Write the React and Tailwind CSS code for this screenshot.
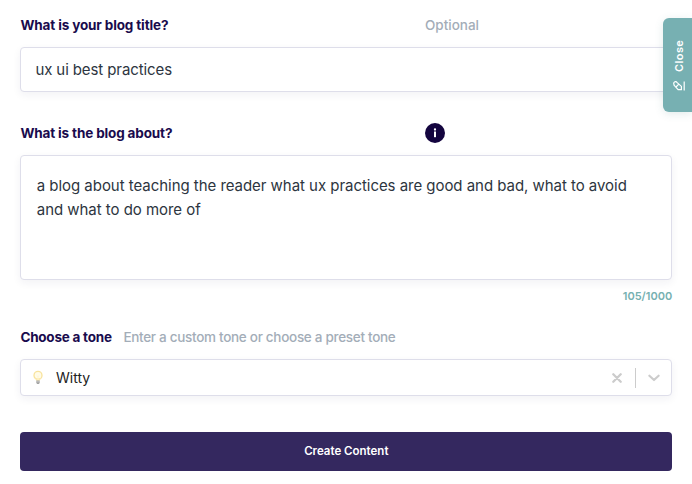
function Label({ children, className = "" }) {
  return <span className={`font-bold text-[13.5px] text-[#190b4d] whitespace-nowrap ${className}`}>{children}</span>;
}

function Bulb() {
  return (
    <svg width="10" height="16" viewBox="0 0 10 16" fill="none">
      <circle cx="5" cy="5.4" r="4" fill="#fffbe8" stroke="#f8e39c" strokeWidth="1.3" />
      <path d="M2.2 8 3.3 10.7h3.4L7.8 8" fill="#fbe9b0" />
      <path d="M3.8 5.6 5 6.6l1.2-1M5 6.6V10" stroke="#fff6d2" strokeWidth=".9" />
      <path d="M3.3 10.5h3.4v2.4L5.8 14H4.2l-.9-1.1Z" fill="#a2a2a2" />
      <path d="M3.3 11.8h3.4" stroke="#ddd" strokeWidth=".6" />
    </svg>
  );
}

const box = "rounded-[4px] border border-[#dedeea] bg-white shadow-[0_3px_8px_rgba(40,40,80,0.06)]";

export default function App() {
  return (
    <div className="relative h-[484px] w-[692px] overflow-hidden bg-white pl-[20.4px] pr-[19.8px] pt-[15px] font-['Inter',sans-serif]">
      <div className="flex h-5 items-center">
        <Label className="w-[404.6px] tracking-[-0.13px]">What is your blog title?</Label>
        <span className="text-[13.5px] font-medium text-[#a3adb8]">Optional</span>
      </div>
      <div className={`${box} mt-3 flex h-[45px] items-center px-[14px] pt-px text-[15px] tracking-[-0.1px] text-[#2d3540]`}>
        <span className="whitespace-nowrap">ux ui best practices</span>
      </div>

      <div className="mt-[31px] flex h-5 items-center">
        <Label className="w-[404.6px] tracking-[-0.14px]">What is the blog about?</Label>
        <span className="flex size-5 items-center justify-center rounded-full bg-[#14053f]">
          <svg width="4" height="10" viewBox="0 0 4 10" fill="#fff">
            <circle cx="2" cy="1.5" r="1.15" />
            <rect x="1" y="3.5" width="2" height="5.7" />
          </svg>
        </span>
      </div>
      <div className={`${box} mt-[11.5px] h-[125.5px] px-[15.4px] pt-[18.5px] text-[15px] leading-6 tracking-[-0.04px] text-[#2d3540]`}>
        <p className="whitespace-nowrap">a blog about teaching the reader what ux practices are good and bad, what to avoid</p>
        <p className="whitespace-nowrap">and what to do more of</p>
      </div>
      <div className="mt-2 flex h-4 items-center justify-end text-[11px] font-semibold text-[#76b0b1]">105/1000</div>

      <div className="mt-[23px] flex h-5 items-center">
        <Label className="w-[103px] tracking-[-0.23px]">Choose a tone</Label>
        <span className="whitespace-nowrap text-[13.5px] font-medium tracking-[-0.3px] text-[#a3adb8]">Enter a custom tone or choose a preset tone</span>
      </div>
      <div className={`${box} mt-[12px] flex h-[37px] items-center pl-3 pr-[11.2px]`}>
        <Bulb />
        <span className="ml-[12.6px] flex-1 text-[14px] text-[#222]">Witty</span>
        <svg width="10" height="10" viewBox="0 0 10 10" stroke="#ccc" strokeWidth="2.3" strokeLinecap="round">
          <path d="m1.3 1.3 7.4 7.4m0-7.4L1.3 8.7" />
        </svg>
        <span className="ml-[13px] h-5 w-px bg-[#ccc]" />
        <svg className="ml-[12px]" width="12" height="8" viewBox="0 0 12 8" fill="none" stroke="#ccc" strokeWidth="2.1" strokeLinecap="round" strokeLinejoin="round">
          <path d="m1.4 1.7 4.6 4.4 4.6-4.4" />
        </svg>
      </div>

      <button className="mt-[35.5px] flex h-[39px] w-full items-center justify-center rounded-[4px] bg-[#34285f] pt-px text-[11.5px] font-semibold text-white">
        Create Content
      </button>

      <div className="absolute right-0 top-[18px] flex h-[94px] w-[28.6px] flex-col items-center rounded-l-[6px] bg-[#77b0b2] pl-[3px] pt-[21px] text-white shadow-[0_2px_8px_rgba(60,120,120,0.15)]">
        <span className="h-[33px] rotate-180 text-[11px] font-semibold leading-[14px] tracking-[0.4px] [writing-mode:vertical-rl]">Close</span>
        <svg className="mt-[9px]" width="12" height="10" viewBox="0 0 12 10" fill="none" stroke="#fff" strokeWidth="1.2" strokeLinejoin="round">
          <path d="M1 3.3a1.7 1.7 0 0 1 2.9-1.9L8.4 5.4v3.3H5.1L1 4.2Z" />
          <path d="M3 6 5.8 3.2" />
          <path d="M11.2.5v9" />
        </svg>
      </div>
    </div>
  );
}
